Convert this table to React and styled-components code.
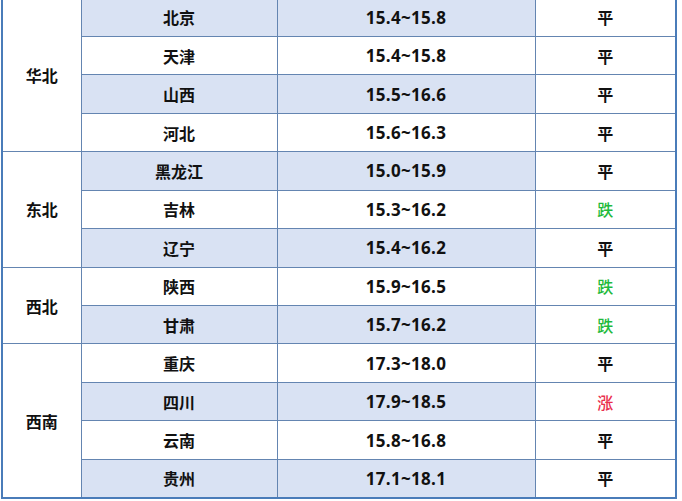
import React from "react";
import styled, { createGlobalStyle } from "styled-components";

const GlobalStyle = createGlobalStyle`
  html, body {
    margin: 0;
    padding: 0;
    background: #ffffff;
  }
`;

const Page = styled.div`
  width: 682px;
  height: 501px;
  overflow: hidden;
  padding-left: 1px;
  box-sizing: border-box;
`;

const Table = styled.table`
  margin-top: -3px;
  width: 674px;
  border-collapse: collapse;
  border: 2px solid #4a7cb9;
  table-layout: fixed;
  font-family: "Noto Sans CJK SC", "Liberation Sans", sans-serif;
  font-weight: 700;
  color: #111;
`;

const Col = styled.col`
  width: ${(p) => p.$w}px;
`;

const Row = styled.tr`
  height: 38.45px;
`;

const Cell = styled.td`
  border: 1px solid #6485b1;
  text-align: center;
  vertical-align: middle;
  padding: 0;
  font-size: 16px;
  line-height: 1;
  background: ${(p) => (p.$shade ? "#d9e2f3" : "#ffffff")};
`;

const PriceCell = styled(Cell)`
  font-family: "Open Sans", "Liberation Sans", sans-serif;
  font-size: 17px;
  letter-spacing: 0.3px;
`;

const TrendCell = styled(Cell)`
  color: ${(p) => (p.$trend === "跌" ? "#1fba3c" : p.$trend === "涨" ? "#ea2f4d" : "#111")};
  font-weight: ${(p) => (p.$trend === "平" ? 700 : 500)};
`;

const groups = [
  {
    region: "华北",
    rows: [
      ["北京", "15.4~15.8", "平"],
      ["天津", "15.4~15.8", "平"],
      ["山西", "15.5~16.6", "平"],
      ["河北", "15.6~16.3", "平"],
    ],
  },
  {
    region: "东北",
    rows: [
      ["黑龙江", "15.0~15.9", "平"],
      ["吉林", "15.3~16.2", "跌"],
      ["辽宁", "15.4~16.2", "平"],
    ],
  },
  {
    region: "西北",
    rows: [
      ["陕西", "15.9~16.5", "跌"],
      ["甘肃", "15.7~16.2", "跌"],
    ],
  },
  {
    region: "西南",
    rows: [
      ["重庆", "17.3~18.0", "平"],
      ["四川", "17.9~18.5", "涨"],
      ["云南", "15.8~16.8", "平"],
      ["贵州", "17.1~18.1", "平"],
    ],
  },
];

export default function App() {
  let idx = 0;
  return (
    <Page>
      <GlobalStyle />
      <Table>
        <colgroup>
          <Col $w={79} />
          <Col $w={196} />
          <Col $w={258} />
          <Col $w={141} />
        </colgroup>
        <tbody>
          {groups.map((g) =>
            g.rows.map((r, i) => {
              const shade = idx % 2 === 0;
              idx++;
              return (
                <Row key={r[0]}>
                  {i === 0 && <Cell rowSpan={g.rows.length}>{g.region}</Cell>}
                  <Cell $shade={shade}>{r[0]}</Cell>
                  <PriceCell $shade={shade}>{r[1]}</PriceCell>
                  <TrendCell $trend={r[2]}>{r[2]}</TrendCell>
                </Row>
              );
            })
          )}
        </tbody>
      </Table>
    </Page>
  );
}
